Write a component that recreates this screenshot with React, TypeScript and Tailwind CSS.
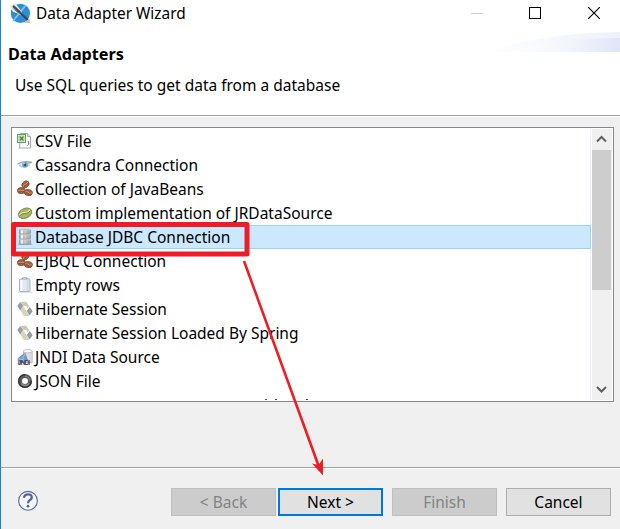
import React from "react";

type IconName = "csv" | "eye" | "beans" | "bean" | "db" | "empty" | "hib" | "jndi" | "json";

const rows: { label: string; icon: IconName; selected?: boolean }[] = [
  { label: "CSV File", icon: "csv" },
  { label: "Cassandra Connection", icon: "eye" },
  { label: "Collection of JavaBeans", icon: "beans" },
  { label: "Custom implementation of JRDataSource", icon: "bean" },
  { label: "Database JDBC Connection", icon: "db", selected: true },
  { label: "EJBQL Connection", icon: "beans" },
  { label: "Empty rows", icon: "empty" },
  { label: "Hibernate Session", icon: "hib" },
  { label: "Hibernate Session Loaded By Spring", icon: "hib" },
  { label: "JNDI Data Source", icon: "jndi" },
  { label: "JSON File", icon: "json" },
];

function Bean({ x, y, r }: { x: number; y: number; r: number }) {
  return (
    <g transform={`translate(${x} ${y}) rotate(${r})`}>
      <ellipse rx="4" ry="3" fill="#a9623e" stroke="#7d462e" strokeWidth="0.8" />
      <path d="M-3.3 .3Q-1-1 0 0T3.3-.3" fill="none" stroke="#e5b494" strokeWidth="0.8" />
      <path d="M-3.3 1.1Q-1-.2 0 .8T3.3.5" fill="none" stroke="#6d3821" strokeWidth="0.6" />
    </g>
  );
}

function RowIcon({ name }: { name: IconName }) {
  return (
    <svg width="16" height="16" viewBox="0 0 16 16" className="block shrink-0 overflow-visible">
      {name === "csv" && (
        <g>
          <path d="M3.5 .5h7l3 3v11.5h-11z" fill="#fafbfb" stroke="#a5afaf" />
          <path d="M10.5.5v3h3" fill="#dfe5e5" stroke="#a5afaf" />
          <path d="M1 15.5h13" stroke="#d3d8d8" />
          <rect x=".5" y="1.5" width="8" height="8" fill="#e9f3e3" stroke="#6a9d60" />
          <path d="M2.7 3.6l3.8 3.9m0-3.9L2.7 7.5" stroke="#438638" strokeWidth="1.4" />
          <path d="M2 3h5v5H2z" fill="none" stroke="#8ab77e" strokeWidth=".6" />
          <path d="M10.7 8.5h1v2.8l-1.2 1.4" fill="none" stroke="#617577" strokeWidth="1" />
        </g>
      )}
      {name === "eye" && (
        <g>
          <path d="M1 7Q6 2.8 14 6.2Q10 12 4 9.7Z" fill="#d5e5eb" />
          <path d="M.5 7Q6 3.3 15 5.3L11 6" fill="none" stroke="#8da8b3" strokeWidth="1.2" />
          <path d="M2 8.5Q7 12 12.8 8" fill="none" stroke="#a2bdc7" />
          <circle cx="8" cy="7.7" r="2.8" fill="#63a4c3" />
          <circle cx="8" cy="7.7" r="1.2" fill="#204a61" />
          <circle cx="7.1" cy="6.7" r=".6" fill="#fff" />
        </g>
      )}
      {name === "beans" && (
        <g>
          <Bean x={8.5} y={3.4} r={-42} />
          <Bean x={4.4} y={9.6} r={-5} />
          <Bean x={11.4} y={11.6} r={12} />
        </g>
      )}
      {name === "bean" && (
        <g transform="rotate(-24 8 8)">
          <ellipse cx="8" cy="8.3" rx="7" ry="4.8" fill="#a9b568" stroke="#7f8a49" />
          <path d="M2 7.5Q5 6 8 7.5T14 7" fill="none" stroke="#dde2a9" strokeWidth="1.4" />
          <path d="M2 8.5Q5 7 8 8.5T14 8" fill="none" stroke="#697431" strokeWidth=".7" />
        </g>
      )}
      {name === "db" && (
        <g>
          <path d="M1 15.3h14" stroke="#9fb0bb" strokeWidth="1.2" />
          {[0, 5, 10].map((y) => (
            <g key={y}>
              <rect x="2.4" y={y + .4} width="11" height="4.7" rx=".8" fill="#b0b2b3" stroke="#8e9293" strokeWidth=".8" />
              <path d={`M5 ${y + 1}v3.6`} stroke="#eeefef" strokeWidth="2.4" />
              <path d={`M8.4 ${y + 1}v3.6`} stroke="#cdcfcf" strokeWidth="2" />
              <path d={`M3 ${y + .8}h10`} stroke="#d7d9da" strokeWidth=".8" />
            </g>
          ))}
        </g>
      )}
      {name === "empty" && (
        <g>
          <path d="M1 15.2h14" stroke="#d5d5d5" />
          <rect x="2.5" y="2" width="10.5" height="12.6" rx=".7" fill="#deebf4" stroke="#a0b4c0" />
          <path d="M4.4 3v11" stroke="#fff" strokeWidth="2" />
          <path d="M10.7 3v11" stroke="#c5dcea" strokeWidth="2" />
          <path d="M5.5 2V.9h4.5V2" fill="#eee" stroke="#91999c" />
        </g>
      )}
      {name === "hib" && (
        <g>
          <path d="M3.6 .7h5.6l2.6 4.4-2.5 4.2-2.8-4.2z" fill="#cfc9aa" />
          <path d="M3.7 9.6l2.8-4.2 2.9 4.8 3 4.9H6.8z" fill="#d6d1b7" />
          <path d="M6.6 5.1h2.7l2.4 4.6H9.2z" fill="#fff" />
          <path d="M3.3 .9L6.2 5.1 3.3 9.4.4 5.1zM12.7 5.9l2.9 4.3-2.9 4.3-2.9-4.3z" fill="#929da6" />
        </g>
      )}
      {name === "jndi" && (
        <g>
          <path d="M6.5 2v11.5h8.7V2" fill="#ddd" stroke="#b0b3b5" strokeWidth=".8" />
          <ellipse cx="10.8" cy="2.2" rx="4.4" ry="1.7" fill="#fafafa" stroke="#aaa" strokeWidth=".7" />
          <path d="M1 9.5L7.8 4.2l3 7.6-9.4 3z" fill="#739bd0" stroke="#6387b5" strokeWidth=".8" />
          <path d="M7.8 4.5L4.5 13M1.5 9.5l8.5 3" stroke="#b8d0ec" strokeWidth=".8" />
          <text x="1" y="15.7" fill="#444" fontSize="6.5" textLength="12" fontFamily="Liberation Sans" fontWeight="700">JNDI</text>
        </g>
      )}
      {name === "json" && (
        <g>
          <circle cx="8" cy="8" r="5" fill="none" stroke="#5a5a5a" strokeWidth="4" />
          <path d="M8 1.7A6.3 6.3 0 1 0 14.3 8" fill="none" stroke="#333" strokeWidth="1.4" />
          <path d="M4.3 10.5a4.6 4.6 0 0 0 7.7-.2" fill="none" stroke="#999" strokeWidth="1.3" />
          <path d="M8 3.4a4.5 4.5 0 0 1 4.6 4" fill="none" stroke="#888" />
        </g>
      )}
    </svg>
  );
}

function Chevron({ down = false }: { down?: boolean }) {
  return (
    <svg width="19" height="21" viewBox="0 0 19 21" className="block shrink-0">
      <path d={down ? "M5 8l4.5 4.5L14 8" : "M5 12.5L9.5 8l4.5 4.5"} fill="none" stroke="#606060" strokeWidth="2" />
    </svg>
  );
}

export default function App() {
  return (
    <div className="relative flex h-[529px] w-[620px] flex-col overflow-hidden border-l border-[#1883d7] bg-[#f0f0f0] font-['Noto_Sans','Open_Sans',sans-serif] text-[15.5px] text-black">
      <header className="relative h-[115px] shrink-0 bg-white">
        <div className="flex h-[26px] items-center">
          <svg width="21" height="21" viewBox="0 0 21 21" className="ml-[9px] shrink-0">
            <circle cx="10.4" cy="10.4" r="9.6" fill="#2b8fd6" />
            <path d="M0 3L5 0l7 9-1 3-8-3z" fill="#e3eef5" />
            <path d="M3 1l8 8-1 1zM1 4l9 6-1 1zM1 8l7 3-1 1z" fill="#5a6e7b" />
            <path d="M3 18L16 2" stroke="#8fc4e8" strokeWidth="1.6" />
            <path d="M3 3l15 14" stroke="#3e464b" strokeWidth="2.1" />
            <path d="M13 20h7v-4z" fill="#c8c8c8" />
          </svg>
          <h1 className="ml-[5px] pt-[2px] text-[15.4px] leading-[26px]">Data Adapter Wizard</h1>
          <div className="ml-auto mr-5 flex items-center">
            <span className="mr-[46px] h-px w-3 bg-[#ccc]" />
            <span className="mr-[47px] h-3 w-3 border border-black" />
            <svg width="12" height="12" viewBox="0 0 12 12"><path d="M0 0l12 12m0-12L0 12" stroke="#000" strokeWidth="1.1" /></svg>
          </div>
        </div>
        <svg className="absolute right-0 top-8" width="135" height="20" viewBox="0 0 135 20">
          <defs>
            <linearGradient id="swoosh"><stop stopColor="#fff" /><stop offset=".5" stopColor="#f3f6fc" /><stop offset="1" stopColor="#dfe6f7" /></linearGradient>
            <linearGradient id="swooshTop"><stop stopColor="#fff" /><stop offset="1" stopColor="#edf1fb" /></linearGradient>
          </defs>
          <path d="M0 20Q55 1 135 0v20z" fill="url(#swooshTop)" />
          <path d="M25 20Q75 6 135 6v14z" fill="url(#swoosh)" />
        </svg>
        <h2 className="ml-[7px] mt-4 text-[16.2px] font-bold leading-6">Data Adapters</h2>
        <p className="ml-[14px] mt-[7px] leading-6">Use SQL queries to get data from a database</p>
      </header>
      <div className="h-0.5 shrink-0 border-b border-t border-b-white border-t-[#a0a0a0]" />
      <main className="ml-[10px] mt-[10px] flex h-[275px] w-[603px] shrink-0 border border-[#828790] bg-white p-px">
        <ul className="h-[271px] w-[578px] shrink-0 border-r border-[#eaf3fc]">
          {rows.map((r) => (
            <li key={r.label} className={r.selected ? "-mr-px flex h-6 items-center border border-l-0 border-[#99d1ff] bg-[#cce8ff] pl-1" : "flex h-6 items-center pl-1"}>
              <RowIcon name={r.icon} />
              <span className="ml-[2px] whitespace-nowrap leading-6">{r.label}</span>
            </li>
          ))}
          <li className="flex pl-[252px] pt-[6px]">
            <i className="h-px w-[2px] bg-[#444]" /><i className="ml-2 h-px w-[2px] bg-[#444]" /><i className="ml-[29px] h-px w-[2px] bg-[#444]" />
          </li>
        </ul>
        <div className="ml-px flex h-[271px] w-5 flex-col bg-[#f0f0f0]">
          <Chevron />
          <div className="h-[140px] w-[19px] shrink-0 bg-[#cdcdcd]" />
          <div className="mt-auto"><Chevron down /></div>
        </div>
      </main>
      <div className="mt-[65px] h-0.5 shrink-0 border-b border-t border-b-white border-t-[#a0a0a0]" />
      <footer className="flex pt-[19px]">
        <svg width="21" height="21" viewBox="0 0 21 21" className="ml-[17px] mt-[2px] shrink-0">
          <circle cx="10" cy="10.8" r="9.4" fill="#f4f5f8" stroke="#576b95" strokeWidth="1.1" />
          <path d="M5.9 7.8Q6.5 4.4 10 4.4c4.6 0 4.8 4.1 1.6 5.8-1.3.8-1.5 1.4-1.5 3" fill="none" stroke="#526691" strokeWidth="2.2" />
          <circle cx="10" cy="16.2" r="1.4" fill="#526691" />
        </svg>
        <button className="ml-[132px] h-7 w-[105px] border border-[#bfbfbf] bg-[#ccc] leading-6 text-[#838383]">&lt; Back</button>
        <button className="ml-[2px] h-7 w-[105px] border-2 border-[#0078d7] bg-[#e1e1e1] leading-6">Next &gt;</button>
        <button className="ml-[9px] h-7 w-[105px] border border-[#bfbfbf] bg-[#ccc] leading-6 text-[#838383]">Finish</button>
        <button className="ml-[9px] h-7 w-[105px] border border-[#adadad] bg-[#e1e1e1] leading-6">Cancel</button>
      </footer>
      <svg className="pointer-events-none absolute -left-px top-0" width="620" height="529" viewBox="0 0 620 529">
        <rect x="13.5" y="224.5" width="233.5" height="29.5" fill="none" stroke="#ee1c24" strokeWidth="5" strokeLinejoin="round" />
        <path d="M244 261L319 467" stroke="#ee1c24" strokeWidth="2.6" />
        <path d="M312 463.5l6.5 1.5 4.5-6.5v17z" fill="#ee1c24" />
      </svg>
    </div>
  );
}
